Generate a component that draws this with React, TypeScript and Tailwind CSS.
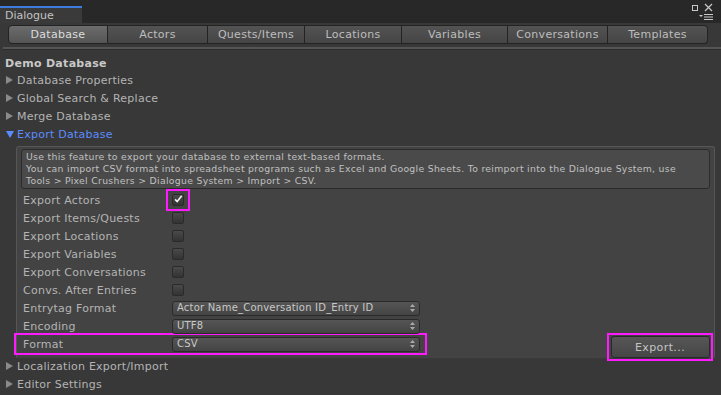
import { ReactNode } from 'react'

const TABS = ['Database', 'Actors', 'Quests/Items', 'Locations', 'Variables', 'Conversations', 'Templates']
const TAB_W = [100, 100, 97, 97, 106, 100, 100]

function Foldout({ label, open = false }: { label: string; open?: boolean }) {
  return (
    <div className={`flex h-[18px] items-center pl-[6px] ${open ? 'text-[#5b8cff]' : ''}`}>
      {open ? (
        <span className="mr-[3px] h-0 w-0 border-x-[4px] border-t-[7px] border-x-transparent border-t-[#5b8cff]" />
      ) : (
        <span className="mr-[4px] h-0 w-0 border-y-[4px] border-l-[7px] border-y-transparent border-l-[#8a8a8a]" />
      )}
      {label}
    </div>
  )
}

function Checkbox({ checked = false }: { checked?: boolean }) {
  return (
    <span className="flex h-[12px] w-[12px] items-center justify-center rounded-[2px] border border-[#2a2a2a] bg-gradient-to-b from-[#4a4a4a] to-[#333]">
      {checked && (
        <svg width="12" height="12" viewBox="0 0 12 12" className="-mt-[2px]">
          <path d="M2.5 6.5 L5 9 L10.5 2" stroke="#eee" strokeWidth="2" fill="none" />
        </svg>
      )}
    </span>
  )
}

function Popup({ value }: { value: string }) {
  return (
    <div className="flex h-[15px] w-[248px] items-center justify-between rounded-[3px] border border-[#2a2a2a] bg-gradient-to-b from-[#555] to-[#444] pl-[4px] pr-[4px] text-[10px] tracking-[0.2px] text-[#c8c8c8]">
      <span>{value}</span>
      <svg width="5" height="8" viewBox="0 0 5 8">
        <path d="M0 3 L2.5 0 L5 3Z M0 5 L2.5 8 L5 5Z" fill="#aaa" />
      </svg>
    </div>
  )
}

function Row({ label, children }: { label: string; children: ReactNode }) {
  return (
    <div className="flex h-[18px] items-center">
      <span className="w-[155px] pl-[6px]">{label}</span>
      {children}
    </div>
  )
}

export default function App() {
  return (
    <div
      className="relative h-[395px] w-[721px] overflow-hidden bg-[#383838] text-[11px] leading-none tracking-[0.25px] text-[#b4b4b4]"
      style={{ fontFamily: '"DejaVu Sans", Verdana, sans-serif' }}
    >
      {/* window title strip */}
      <div className="flex h-[23px] items-end justify-between bg-[#282828]">
        <div className="flex h-[17px] w-[82px] items-center border-t-2 border-[#3e7be0] bg-[#3a3a3a] pl-[5px] tracking-normal text-[#c2c2c2]">
          Dialogue
        </div>
        <div className="mb-[3px] mr-[8px] flex flex-col items-end gap-[2px]">
          <div className="flex items-center gap-[6px]">
            <span className="h-[6px] w-[6px] border-[1.5px] border-[#c8c8c8]" />
            <svg width="9" height="9" viewBox="0 0 9 9">
              <path d="M1 1 L8 8 M8 1 L1 8" stroke="#c8c8c8" strokeWidth="1.2" />
            </svg>
          </div>
          <svg width="14" height="6" viewBox="0 0 14 6">
            <path d="M0 1 L4 1 L2 3Z" fill="#c8c8c8" />
            <path d="M5 0.5 H14 M5 3 H14 M5 5.5 H14" stroke="#c8c8c8" strokeWidth="1" />
          </svg>
        </div>
      </div>

      {/* toolbar tabs */}
      <div className="mt-[2px] flex px-[8px]">
        {TABS.map((t, i) => (
          <div
            key={t}
            style={{ width: TAB_W[i] }}
            className={`flex h-[19px] items-center justify-center border-y border-r border-[#232323] tracking-[0.3px] text-[#bdbdbd] ${
              i === 0
                ? 'rounded-l-[4px] border-l bg-gradient-to-b from-[#6c6c6c] to-[#555] text-[#dcdcdc]'
                : 'bg-gradient-to-b from-[#535353] to-[#454545]'
            } ${i === TABS.length - 1 ? 'rounded-r-[4px]' : ''}`}
          >
            {t}
          </div>
        ))}
      </div>
      <div className="ml-[3px] mt-[3px] h-[2px] bg-[#555] shadow-[0_1px_0_#2c2c2c]" />

      {/* content */}
      <div className="mt-[9px] pl-[5px] font-bold tracking-[0.3px] text-[#c8c8c8]">Demo Database</div>
      <div className="mt-[2px]">
        <Foldout label="Database Properties" />
        <Foldout label="Global Search & Replace" />
        <Foldout label="Merge Database" />
        <Foldout label="Export Database" open />
      </div>

      <div className="ml-[16px] mr-[6px] mt-[3px] rounded-[3px] border border-[#565656] border-b-[#3a3a3a] bg-[#434343] pb-[5px] pt-[2px]">
        <div className="mx-[4px] rounded-[3px] border border-[#2b2b2b] bg-[#4a4a4a] px-[4px] py-[1px] text-[9.3px] leading-[12px] tracking-[0.3px] text-[#c0c0c0]">
          <div>Use this feature to export your database to external text-based formats.</div>
          <div>
            You can import CSV format into spreadsheet programs such as Excel and Google Sheets. To reimport into the Dialogue System, use
          </div>
          <div>Tools &gt; Pixel Crushers &gt; Dialogue System &gt; Import &gt; CSV.</div>
        </div>

        <div className="mt-[2px] flex items-end">
          <div className="flex-1">
            <Row label="Export Actors">
              <span className="-my-[2px] -ml-[6px] flex h-[22px] w-[24px] items-center justify-center border-[2px] border-[#ff1aff]">
                <Checkbox checked />
              </span>
            </Row>
            <Row label="Export Items/Quests">
              <Checkbox />
            </Row>
            <Row label="Export Locations">
              <Checkbox />
            </Row>
            <Row label="Export Variables">
              <Checkbox />
            </Row>
            <Row label="Export Conversations">
              <Checkbox />
            </Row>
            <Row label="Convs. After Entries">
              <Checkbox />
            </Row>
            <Row label="Entrytag Format">
              <Popup value="Actor Name_Conversation ID_Entry ID" />
            </Row>
            <Row label="Encoding">
              <Popup value="UTF8" />
            </Row>
            <div className="-my-[2px] ml-[-3px] box-content flex h-[18px] w-[409px] items-center border-[2px] border-[#ff1aff]">
              <span className="w-[156px] pl-[7px]">Format</span>
              <Popup value="CSV" />
            </div>
          </div>
          <div className="-mb-[8px] mr-[1px] flex h-[28px] w-[106px] items-center justify-center border-[2px] border-[#ff1aff]">
            <div className="flex h-[22px] w-[99px] items-center justify-center rounded-[3px] border border-[#2a2a2a] bg-gradient-to-b from-[#565656] to-[#464646] tracking-[0.4px] text-[#c4c4c4]">
              Export...
            </div>
          </div>
        </div>
      </div>

      <div className="mt-[-2px]">
        <Foldout label="Localization Export/Import" />
        <Foldout label="Editor Settings" />
      </div>
    </div>
  )
}
